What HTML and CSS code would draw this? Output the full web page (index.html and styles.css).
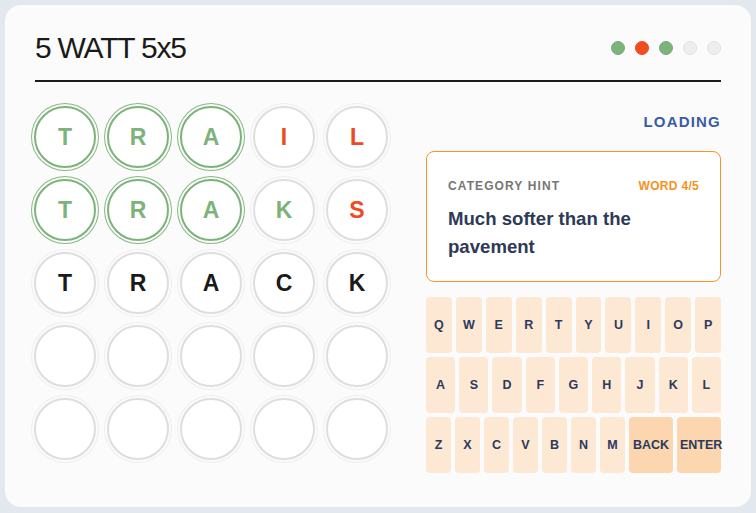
FILE: index.html
```html
<!DOCTYPE html>
<html>
<head>
<meta charset="utf-8">
<link rel="stylesheet" href="styles.css">
</head>
<body>
<div class="card">
  <div class="header">
    <h1 class="title">5 WATT 5x5</h1>
    <div class="dots">
      <span class="dot dot-green"></span>
      <span class="dot dot-red"></span>
      <span class="dot dot-green"></span>
      <span class="dot dot-empty"></span>
      <span class="dot dot-empty"></span>
    </div>
  </div>
  <div class="main">
    <div class="board">
      <div class="cell correct">T</div>
      <div class="cell correct">R</div>
      <div class="cell correct">A</div>
      <div class="cell miss">I</div>
      <div class="cell miss">L</div>

      <div class="cell correct">T</div>
      <div class="cell correct">R</div>
      <div class="cell correct">A</div>
      <div class="cell near">K</div>
      <div class="cell miss">S</div>

      <div class="cell typed">T</div>
      <div class="cell typed">R</div>
      <div class="cell typed">A</div>
      <div class="cell typed">C</div>
      <div class="cell typed">K</div>

      <div class="cell"></div>
      <div class="cell"></div>
      <div class="cell"></div>
      <div class="cell"></div>
      <div class="cell"></div>

      <div class="cell"></div>
      <div class="cell"></div>
      <div class="cell"></div>
      <div class="cell"></div>
      <div class="cell"></div>
    </div>
    <div class="side">
      <div class="status">LOADING</div>
      <div class="hint">
        <div class="hint-head">
          <span class="hint-label">CATEGORY HINT</span>
          <span class="hint-count">WORD 4/5</span>
        </div>
        <div class="hint-text">Much softer than the pavement</div>
      </div>
      <div class="keyboard">
        <div class="krow">
          <div class="key">Q</div><div class="key">W</div><div class="key">E</div><div class="key">R</div><div class="key">T</div><div class="key">Y</div><div class="key">U</div><div class="key">I</div><div class="key">O</div><div class="key">P</div>
        </div>
        <div class="krow">
          <div class="key">A</div><div class="key">S</div><div class="key">D</div><div class="key">F</div><div class="key">G</div><div class="key">H</div><div class="key">J</div><div class="key">K</div><div class="key">L</div>
        </div>
        <div class="krow">
          <div class="key small">Z</div><div class="key small">X</div><div class="key small">C</div><div class="key small">V</div><div class="key small">B</div><div class="key small">N</div><div class="key small">M</div><div class="key wide">BACK</div><div class="key wide">ENTER</div>
        </div>
      </div>
    </div>
  </div>
</div>
</body>
</html>
```
FILE: styles.css
```css
html, body {
  margin: 0;
  padding: 0;
}
body {
  background: #e3e7ee;
  padding: 5px;
  font-family: "Liberation Sans", Arial, sans-serif;
}
.card {
  width: 746px;
  height: 502px;
  box-sizing: border-box;
  background: #fbfbfb;
  border-radius: 16px;
  padding: 26px 30px 0 30px;
}
.header {
  display: flex;
  justify-content: space-between;
  align-items: center;
  padding-bottom: 15px;
  border-bottom: 2px solid #1c1c1c;
}
.title {
  margin: 0;
  font-size: 30px;
  font-weight: 400;
  line-height: 34px;
  letter-spacing: -1.2px;
  color: #1a1a1a;
}
.dots {
  display: flex;
  gap: 10px;
}
.dot {
  width: 14px;
  height: 14px;
  border-radius: 50%;
  box-sizing: border-box;
}
.dot-green { background: #7db37a; border: 1px solid #77ad75; }
.dot-red { background: #f24c22; border: 1px solid #ec4a20; }
.dot-empty { background: #eeeeee; border: 1px solid #e2e2e2; }

.main {
  display: flex;
  gap: 38px;
  margin-top: 24px;
}
.board {
  display: grid;
  grid-template-columns: repeat(5, 62px);
  grid-auto-rows: 62px;
  gap: 11px;
  margin-left: -1px;
}
.cell {
  box-sizing: border-box;
  width: 62px;
  height: 62px;
  border-radius: 50%;
  border: 2px solid #dedede;
  background: #ffffff;
  box-shadow: 0 0 0 2px #fbfbfb, 0 0 0 3px #efefef;
  display: flex;
  align-items: center;
  justify-content: center;
  font-size: 23px;
  font-weight: 700;
  color: #1a1a1a;
}
.cell.correct {
  border-color: #7db37b;
  box-shadow: 0 0 0 2px #fbfbfb, 0 0 0 3px #86b884;
  color: #7db37b;
}
.cell.near { color: #7db37b; }
.cell.miss { color: #f04a22; }
.cell.typed { color: #1a1a1a; }

.side {
  width: 295px;
  display: flex;
  flex-direction: column;
}
.status {
  margin-top: 7px;
  text-align: right;
  font-size: 15px;
  line-height: 18px;
  font-weight: 700;
  letter-spacing: 1.2px;
  color: #3a5ba6;
}
.hint {
  margin-top: 20px;
  border: 1px solid #f5952a;
  border-radius: 8px;
  padding: 27px 21px 20px 21px;
  background: #ffffff;
}
.hint-head {
  display: flex;
  justify-content: space-between;
  font-size: 12px;
  line-height: 14px;
  font-weight: 700;
}
.hint-label {
  color: #767676;
  letter-spacing: 1.1px;
}
.hint-count {
  color: #f7921e;
  letter-spacing: 0.3px;
}
.hint-text {
  margin-top: 12px;
  font-size: 18.6px;
  line-height: 28px;
  font-weight: 700;
  color: #2d3a56;
}
.keyboard {
  margin-top: 15px;
  display: flex;
  flex-direction: column;
  gap: 4px;
}
.krow {
  display: flex;
  gap: 4px;
}
.key {
  flex: 1 1 0;
  min-width: 0;
  height: 56px;
  line-height: 56px;
  padding: 0;
  box-sizing: border-box;
  text-align: center;
  background: #fde8d4;
  border-radius: 4px;
  font-size: 12.5px;
  font-weight: 700;
  color: #2c3a5c;
  white-space: nowrap;
}
.key.small {
  flex: 0 0 25px;
}
.key.wide {
  flex: 1 1 0;
  padding: 0 3px;
  background: #fbd6ae;
}
```
